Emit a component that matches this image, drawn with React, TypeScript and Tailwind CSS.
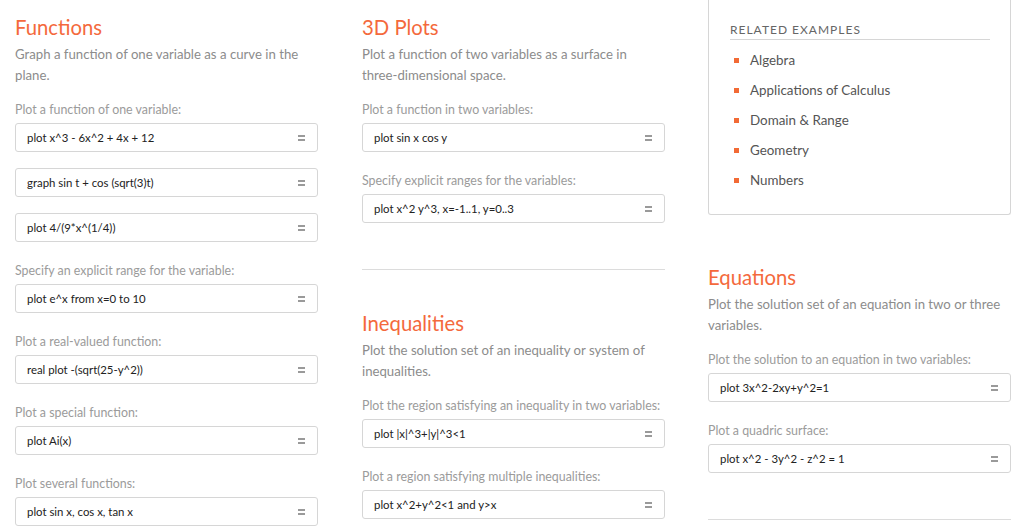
import React from "react";

const FONT = { fontFamily: "Lato, 'Noto Sans', sans-serif" };

function Eq() {
  return (
    <span className="flex flex-col gap-[2px]">
      <span className="block w-[7px] h-[2px] bg-[#9a9a9a]" />
      <span className="block w-[7px] h-[2px] bg-[#9a9a9a]" />
    </span>
  );
}

function Box({ text, first }: { text: string; first?: boolean }) {
  return (
    <div
      className={`${first ? "" : "mt-[16px]"} h-[29px] border border-[#d6d6d6] rounded-[3px] flex items-center justify-between pl-[11px] pr-[12px] text-[11.4px] text-[#222] bg-white whitespace-nowrap`}
    >
      <span>{text}</span>
      <Eq />
    </div>
  );
}

function Group({ label, boxes, first }: { label: string; boxes: string[]; first?: boolean }) {
  return (
    <div className={first ? "mt-[14px]" : "mt-[19px]"}>
      <div className="text-[12.4px] leading-[20px] text-[#9b9b9b] mb-[3px] whitespace-nowrap">{label}</div>
      {boxes.map((b, i) => (
        <Box key={i} text={b} first={i === 0} />
      ))}
    </div>
  );
}

function Heading({ title, desc }: { title: string; desc: React.ReactNode }) {
  return (
    <div>
      <h2 className="text-[20.3px] leading-[26px] text-[#f4693c]">{title}</h2>
      <p className="mt-[4px] text-[13.2px] leading-[21px] text-[#8c8c8c] whitespace-nowrap">{desc}</p>
    </div>
  );
}

export default function App() {
  return (
    <div className="w-[1025px] h-[529px] overflow-hidden bg-white" style={FONT}>
      <div className="flex pl-[15px] gap-[44px]">
        {/* Column 1 */}
        <div className="w-[303px] pt-[14px]">
          <Heading
            title="Functions"
            desc={<>Graph a function of one variable as a curve in the<br />plane.</>}
          />
          <Group
            first
            label="Plot a function of one variable:"
            boxes={["plot x^3 - 6x^2 + 4x + 12", "graph sin t + cos (sqrt(3)t)", "plot 4/(9*x^(1/4))"]}
          />
          <Group label="Specify an explicit range for the variable:" boxes={["plot e^x from x=0 to 10"]} />
          <Group label="Plot a real-valued function:" boxes={["real plot -(sqrt(25-y^2))"]} />
          <Group label="Plot a special function:" boxes={["plot Ai(x)"]} />
          <Group label="Plot several functions:" boxes={["plot sin x, cos x, tan x"]} />
        </div>

        {/* Column 2 */}
        <div className="w-[303px] pt-[14px]">
          <Heading
            title="3D Plots"
            desc={<>Plot a function of two variables as a surface in<br />three-dimensional space.</>}
          />
          <Group first label="Plot a function in two variables:" boxes={["plot sin x cos y"]} />
          <Group label="Specify explicit ranges for the variables:" boxes={["plot x^2 y^3, x=-1..1, y=0..3"]} />
          <div className="mt-[46px] border-t border-[#dcdcdc]" />
          <div className="mt-[40px]">
            <Heading
              title="Inequalities"
              desc={<>Plot the solution set of an inequality or system of<br />inequalities.</>}
            />
            <Group first label="Plot the region satisfying an inequality in two variables:" boxes={["plot |x|^3+|y|^3<1"]} />
            <Group label="Plot a region satisfying multiple inequalities:" boxes={["plot x^2+y^2<1 and y>x"]} />
          </div>
        </div>

        {/* Column 3 */}
        <div className="w-[303px] -ml-[1px]">
          <div className="border-x border-b border-[#d6d6d6] rounded-b-[3px] pt-[22px] pl-[21px] pr-[20px] pb-[19px]">
            <div className="text-[12px] leading-[16px] tracking-[1px] text-[#666] pb-[1px] border-b border-[#d6d6d6]">
              RELATED EXAMPLES
            </div>
            <ul className="mt-[5px]">
              {["Algebra", "Applications of Calculus", "Domain & Range", "Geometry", "Numbers"].map((t) => (
                <li key={t} className="h-[30px] flex items-center">
                  <span className="block w-[5px] h-[5px] bg-[#f26a35] ml-[4px] mr-[11px]" />
                  <span className="text-[13.4px] text-[#555]">{t}</span>
                </li>
              ))}
            </ul>
          </div>
          <div className="mt-[49px]">
            <Heading
              title="Equations"
              desc={<>Plot the solution set of an equation in two or three<br />variables.</>}
            />
            <Group first label="Plot the solution to an equation in two variables:" boxes={["plot 3x^2-2xy+y^2=1"]} />
            <Group label="Plot a quadric surface:" boxes={["plot x^2 - 3y^2 - z^2 = 1"]} />
            <div className="mt-[46px] border-t border-[#dcdcdc]" />
          </div>
        </div>
      </div>
    </div>
  );
}
